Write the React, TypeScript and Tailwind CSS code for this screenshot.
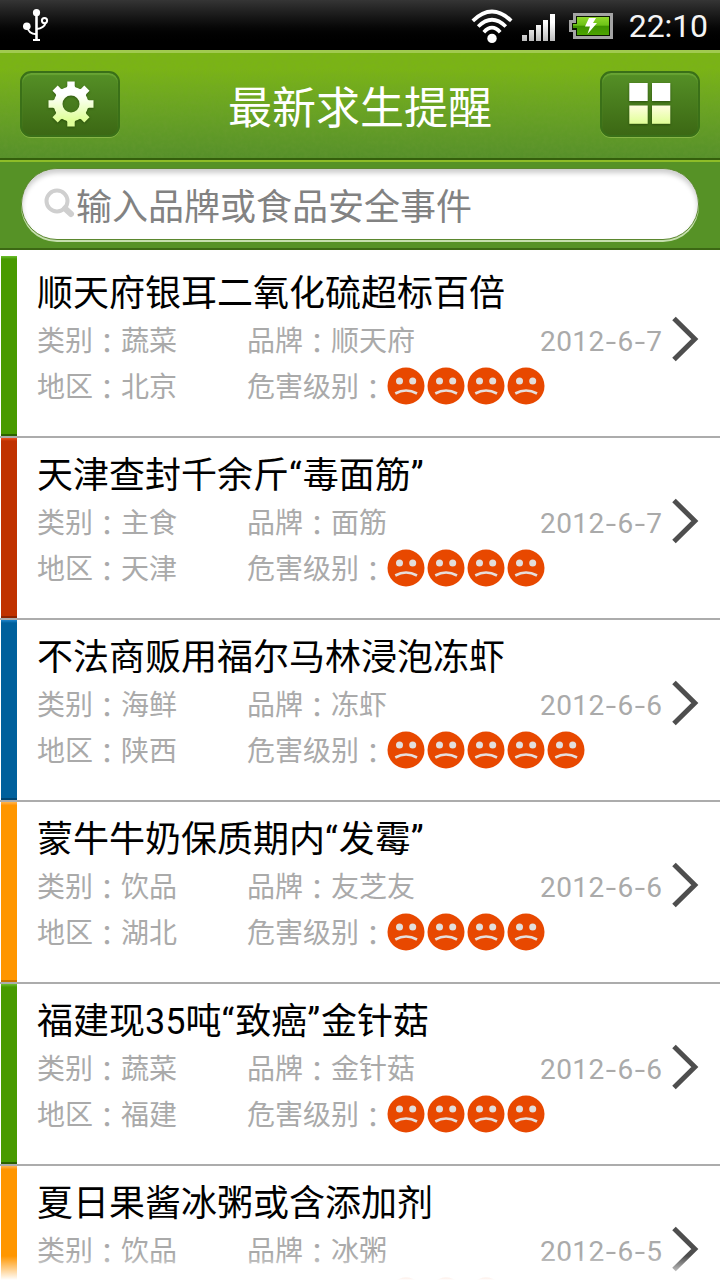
import React from "react";

type Item = {
  title: string;
  category: string;
  brand: string;
  region?: string;
  date: string;
  level: number;
  bar: string;
};

const GREEN = "bg-linear-to-b from-[#6cc02c] via-[#489a00] via-[3px] to-[#489a00] border-b-[#2c6100]";
const RED = "bg-linear-to-b from-[#f0501c] via-[#c03200] via-[3px] to-[#c03200] border-b-[#8c2400]";
const BLUE = "bg-linear-to-b from-[#1c84cc] via-[#00609c] via-[3px] to-[#00609c] border-b-[#004470]";
const ORANGE = "bg-linear-to-b from-[#ffb64a] via-[#ff9600] via-[3px] to-[#ff9600] border-b-[#c87400]";

const items: Item[] = [
  { title: "顺天府银耳二氧化硫超标百倍", category: "蔬菜", brand: "顺天府", region: "北京", date: "2012-6-7", level: 4, bar: GREEN },
  { title: "天津查封千余斤“毒面筋”", category: "主食", brand: "面筋", region: "天津", date: "2012-6-7", level: 4, bar: RED },
  { title: "不法商贩用福尔马林浸泡冻虾", category: "海鲜", brand: "冻虾", region: "陕西", date: "2012-6-6", level: 5, bar: BLUE },
  { title: "蒙牛牛奶保质期内“发霉”", category: "饮品", brand: "友芝友", region: "湖北", date: "2012-6-6", level: 4, bar: ORANGE },
  { title: "福建现35吨“致癌”金针菇", category: "蔬菜", brand: "金针菇", region: "福建", date: "2012-6-6", level: 4, bar: GREEN },
  { title: "夏日果酱冰粥或含添加剂", category: "饮品", brand: "冰粥", date: "2012-6-5", level: 3, bar: ORANGE },
];

function UsbIcon() {
  return (
    <svg width="28" height="34" viewBox="22 8 28 34" fill="none" stroke="#fff" strokeWidth="2">
      <path d="M36.5 13V40" strokeWidth="2.6" />
      <path d="M33 40h7" />
      <circle cx="36.5" cy="12.7" r="3.6" fill="#fff" stroke="none" />
      <circle cx="26.8" cy="26.2" r="3.8" fill="#fff" stroke="none" />
      <path d="M27.5 27C28 32 32 34 36.5 34.3" />
      <circle cx="44.5" cy="20.6" r="2.6" />
      <path d="M45.5 23C44.5 27 41 28.5 36.5 29" />
    </svg>
  );
}

function WifiIcon() {
  return (
    <svg width="42" height="36" viewBox="470.5 8 42 36" fill="none" stroke="#fff" strokeWidth="3.7">
      <path d="M472.3 20.8Q491.5 2.2 510.7 20.8" />
      <path d="M477.7 26.5Q491.5 13 505.3 26.5" />
      <path d="M483.3 32.2Q491.5 23.2 499.7 32.2" />
      <circle cx="491.5" cy="38.4" r="4.7" fill="#fff" stroke="none" />
    </svg>
  );
}

function SignalIcon() {
  return (
    <svg width="34" height="28" viewBox="0 0 34 28">
      <defs>
        <linearGradient id="sig" x1="0" y1="0" x2="0" y2="28" gradientUnits="userSpaceOnUse">
          <stop offset="0.3" stopColor="#fff" />
          <stop offset="1" stopColor="#b8b8b8" />
        </linearGradient>
      </defs>
      <path fill="url(#sig)" d="M0 21h5v6H0zM7 16h5v11H7zM14 11h5v16h-5zM21 6h5v21h-5zM28 0h5v27h-5z" />
    </svg>
  );
}

function BatteryIcon() {
  return (
    <svg width="44" height="26" viewBox="0 0 44 26">
      <defs>
        <linearGradient id="bat" x1="0" y1="0" x2="0" y2="1">
          <stop offset="0" stopColor="#90d92c" />
          <stop offset="0.46" stopColor="#6cc216" />
          <stop offset="0.5" stopColor="#3e9200" />
          <stop offset="1" stopColor="#4ca400" />
        </linearGradient>
      </defs>
      <path d="M4 0h40v26H4v-7H0V7h4z" fill="#a4a4a4" />
      <path d="M7 3h34v20H7v-6H3v-7h4z" fill="#0a1500" />
      <path d="M8 4h32v18H8v-7H4v-4h4z" fill="url(#bat)" />
      <path d="M20 5h7l-3 5h4L18.500 21l2.500-7.500h-5z" fill="#fff" />
    </svg>
  );
}

function GearIcon() {
  const angles = [0, 45, 90, 135, 180, 225, 270, 315];
  return (
    <svg width="48" height="48" viewBox="-24 -24 48 48" className="ml-px drop-shadow-[0_1px_1px_rgba(30,60,5,0.6)]">
      <defs>
        <linearGradient id="gear" x1="0" y1="-23" x2="0" y2="23" gradientUnits="userSpaceOnUse">
          <stop offset="0.3" stopColor="#fff" />
          <stop offset="0.85" stopColor="#deff98" />
        </linearGradient>
        <mask id="gearShape" maskUnits="userSpaceOnUse" x="-24" y="-24" width="48" height="48">
          <circle r="17.300" fill="#fff" />
          {angles.map((a) => (
            <path key={a} d="M-5.500 -14L-3.700 -18V-22.500H3.700V-18L5.500 -14z" fill="#fff" transform={`rotate(${a})`} />
          ))}
          <circle r="8.500" fill="#000" />
        </mask>
      </defs>
      <rect x="-24" y="-24" width="48" height="48" fill="url(#gear)" mask="url(#gearShape)" />
    </svg>
  );
}

function GridIcon() {
  return (
    <svg width="42" height="44" viewBox="0 0 42 44" className="drop-shadow-[0_1px_1px_rgba(30,60,5,0.7)]">
      <defs>
        <linearGradient id="cell" x1="0" y1="0" x2="0" y2="1">
          <stop offset="0" stopColor="#fffde0" />
          <stop offset="1" stopColor="#e0ff96" />
        </linearGradient>
      </defs>
      <path d="M0.300 1h18.400v18H0.300zM23 1h18.300v18H23z" fill="#fff" />
      <rect x="0.300" y="23.500" width="18.400" height="18.300" fill="url(#cell)" />
      <rect x="23" y="23.500" width="18.300" height="18.300" fill="url(#cell)" />
    </svg>
  );
}

function SadFace() {
  return (
    <svg width="40" height="40" viewBox="0 0 40 40">
      <circle cx="20" cy="20" r="18.500" fill="#e84800" />
      <circle cx="13.500" cy="15" r="3.500" fill="#e2dedc" />
      <circle cx="26.700" cy="15" r="3.500" fill="#e2dedc" />
      <path d="M9.300 27.500Q20 21.500 31 27.500" fill="none" stroke="#e6dedb" strokeWidth="2.600" />
    </svg>
  );
}

function Chevron() {
  return (
    <svg width="28" height="46" viewBox="0 0 28 46" fill="none" stroke="#4e4e4e" strokeWidth="5">
      <path d="M2 2.500L22.800 23L2 43.500" />
    </svg>
  );
}

function Colon() {
  return <span className="inline-block translate-y-[3px] leading-none font-['Noto_Sans_CJK_TC',sans-serif]">：</span>;
}

function Title({ text }: { text: string }) {
  return (
    <h2 className="h-[47px] text-[36px] leading-[48px] whitespace-nowrap text-black">
      {text.split(/([“”])/).map((part, i) =>
        part === "“" || part === "”" ? <span key={i} className="tracking-[1px]">{part}</span> : part,
      )}
    </h2>
  );
}

function DateText({ value }: { value: string }) {
  const parts = value.split("-");
  return (
    <span className="flex h-[34px] items-center tracking-[0.45px]">
      {parts.map((p, i) => (
        <React.Fragment key={i}>
          {i > 0 && <span className="w-[12.700px] scale-x-[1.350] text-center">-</span>}
          <span>{p}</span>
        </React.Fragment>
      ))}
    </span>
  );
}

function Row({ item }: { item: Item }) {
  return (
    <li className="flex h-[182px] shrink-0 border-b-2 border-[#acacac] pl-px">
      <div className={`w-4 shrink-0 border-b-2 ${item.bar}`} />
      <div className="flex min-w-0 flex-1 flex-col pl-[20px] pt-[14px]">
        <Title text={item.title} />
        <div className="flex h-[46px] text-[28px] leading-[46px] whitespace-nowrap text-[#aaa]">
          <span className="w-[210px] pt-[2px]">类别<Colon />{item.category}</span>
          <span className="w-[293px] pt-[2px]">品牌<Colon />{item.brand}</span>
          <div className="flex h-[46px] w-[162px] items-start">
            <div className="w-[132px] pt-[8px]"><DateText value={item.date} /></div>
            <div className="-mt-px"><Chevron /></div>
          </div>
        </div>
        <div className="flex h-[46px] items-center text-[28px] leading-[42px] whitespace-nowrap text-[#aaa]">
          {item.region && (
            <>
              <span className="w-[210px] pt-[3px]">地区<Colon />{item.region}</span>
              <span className="w-[139px] pt-[3px]">危害级别<Colon /></span>
            </>
          )}
          <div className={item.region ? "flex" : "ml-[349px] flex"}>
            {Array.from({ length: item.level }, (_, i) => <SadFace key={i} />)}
          </div>
        </div>
      </div>
    </li>
  );
}

const BUTTON =
  "flex h-[66px] w-[100px] items-center justify-center rounded-[11px] border-2 border-[#3a7018] bg-linear-to-b from-[#559026] to-[#3c6814] shadow-[0_1px_0_#86b446,inset_0_2px_1px_#68a434]";

export default function App() {
  return (
    <div className="relative flex h-[1280px] w-[720px] flex-col overflow-hidden bg-white font-['Roboto','Noto_Sans_CJK_SC',sans-serif]">
      <div className="flex h-[50px] shrink-0 items-center justify-between bg-linear-to-b from-[#353535] to-black to-90% pl-[22px] pr-[12px]">
        <UsbIcon />
        <div className="flex items-center">
          <div className="mr-[9px] pt-px"><WifiIcon /></div>
          <div className="mr-[13px] pt-[6px]"><SignalIcon /></div>
          <div className="mr-[16px] pt-[2px]"><BatteryIcon /></div>
          <span className="pt-px text-[32px] leading-[48px] tracking-[-0.1px] text-[#f4f4f4]">22:10</span>
        </div>
      </div>

      <header className="relative flex h-[110px] shrink-0 items-start justify-between border-t-[3px] border-b-2 border-t-[#a1ca50] border-b-[#345f0c] bg-linear-to-b from-[#7ab415] from-15% to-[#56902a] px-5 pt-[18px]">
        <svg className="pointer-events-none absolute inset-0 opacity-15" width="720" height="105">
          <filter id="grain">
            <feTurbulence type="fractalNoise" baseFrequency="0.25" numOctaves="2" seed="4" />
            <feColorMatrix type="matrix" values="0 0 0 0 0.2  0 0 0 0 0.35  0 0 0 0 0.05  1.8 0 0 0 -0.55" />
          </filter>
          <rect width="720" height="105" filter="url(#grain)" />
        </svg>
        <button className={`relative ${BUTTON}`}><GearIcon /></button>
        <h1 className="relative h-[70px] pt-[3px] text-[44px] leading-[70px] text-white">最新求生提醒</h1>
        <button className={`relative ${BUTTON}`}><GridIcon /></button>
      </header>

      <div className="h-[90px] shrink-0 border-t-2 border-b-2 border-t-[#8ebd28] border-b-[#3c6814] bg-[#569226] px-[21px] pt-[6px]">
        <div className="flex h-[72px] items-center rounded-[38px] border border-[#5b872f] bg-white pl-[22px] shadow-[0_2px_0_#c6dfae,inset_0_4px_5px_rgba(0,0,0,0.2)]">
          <svg width="32" height="32" viewBox="0 0 32 32" fill="none" stroke="#cfcfcf">
            <circle cx="13" cy="13" r="10.500" strokeWidth="4" />
            <path d="M21 20.500L27 26" strokeWidth="6" strokeLinecap="round" />
          </svg>
          <span className="pt-[7px] text-[36px] leading-[60px] text-[#828282]">输入品牌或食品安全事件</span>
        </div>
      </div>

      <ul className="flex min-h-0 flex-1 flex-col overflow-hidden pt-[6px]">
        {items.map((item) => <Row key={item.title} item={item} />)}
      </ul>
      <div className="pointer-events-none absolute inset-x-0 bottom-0 h-6 bg-linear-to-b from-white/0 to-white" />
    </div>
  );
}
